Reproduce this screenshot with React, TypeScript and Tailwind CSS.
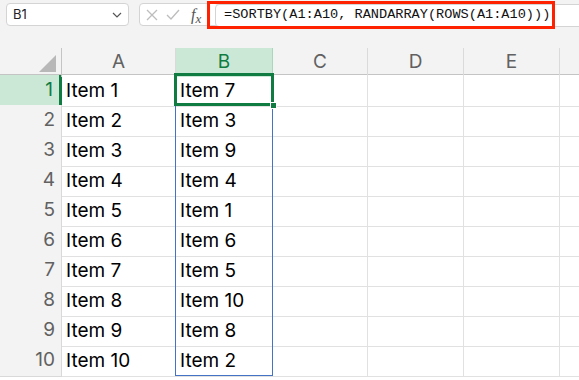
import React from "react";

const colA = ["Item 1", "Item 2", "Item 3", "Item 4", "Item 5", "Item 6", "Item 7", "Item 8", "Item 9", "Item 10"];
const colB = ["Item 7", "Item 3", "Item 9", "Item 4", "Item 1", "Item 6", "Item 5", "Item 10", "Item 8", "Item 2"];

const cols = "grid grid-cols-[62px_114px_97px_95px_96px_96px_1fr]";
const font = { fontFamily: "Inter, 'Liberation Sans', sans-serif" };

const App = () => {
  return (
    <div className="w-[579px] h-[380px] overflow-hidden bg-white relative" style={font}>
      {/* formula bar */}
      <div className="h-[48px] bg-[#f3f3f3] relative">
        <div className="flex items-start pt-[3px] pl-[6px] gap-[10px]">
          <div className="w-[123px] h-[23px] bg-white border border-[#d4d4d4] rounded-[4px] flex items-center justify-between pl-[6px] pr-[6px] text-[13px] text-[#222]">
            <span>B1</span>
            <svg width="10" height="6" viewBox="0 0 10 6" fill="none" stroke="#555" strokeWidth="1.2">
              <path d="M1 1l4 4 4-4" />
            </svg>
          </div>
          <div className="w-[80px] h-[23px] bg-white border border-[#d4d4d4] rounded-[4px] flex items-center pl-[6px] gap-[8px]">
            <svg width="12" height="12" viewBox="0 0 12 12" stroke="#bdbdbd" strokeWidth="1.3">
              <path d="M1 1l10 10M11 1L1 11" />
            </svg>
            <svg width="14" height="11" viewBox="0 0 14 11" fill="none" stroke="#bdbdbd" strokeWidth="1.3">
              <path d="M1 6l4 4 8-9" />
            </svg>
            <span className="text-[16px] italic text-[#555] ml-[3px] leading-none" style={{ fontFamily: "'Liberation Serif', serif" }}>
              f<span className="text-[13px] relative top-[3px]">x</span>
            </span>
          </div>
        </div>
        <div className="absolute left-[215px] top-[4px] right-[-10px] h-[23px] bg-white border border-[#d4d4d4] rounded-[4px] flex items-center pl-[8px] text-[13.6px] text-[#111]" style={{ fontFamily: "'Liberation Mono', monospace" }}>
          =SORTBY(A1:A10, RANDARRAY(ROWS(A1:A10)))
        </div>
        <div className="absolute left-[207px] top-[1px] w-[348px] h-[28px] border-[3px] border-[#ff2200]" />
      </div>

      {/* column headers */}
      <div className={`${cols} h-[27px] bg-[#f3f3f3] border-b border-[#c4c4c4] text-[19px] text-[#616161]`}>
        <div className="relative border-r border-[#c4c4c4]">
          <div className="absolute right-[5px] bottom-[5px] w-0 h-0 border-l-[17px] border-l-transparent border-b-[17px] border-b-[#b8b8b8]" />
        </div>
        <div className="flex items-center justify-center border-r border-[#dadada]">A</div>
        <div className="flex items-center justify-center bg-[#cbe8d7] text-[#107c41] border-r border-[#a8d8bb]">B</div>
        <div className="flex items-center justify-center border-r border-[#dadada]">C</div>
        <div className="flex items-center justify-center border-r border-[#dadada]">D</div>
        <div className="flex items-center justify-center border-r border-[#dadada]">E</div>
        <div />
      </div>

      {/* rows */}
      {colA.map((a, i) => (
        <div key={i} className={`${cols} h-[30px] text-[19px]`}>
          <div
            className={`flex items-center justify-end pr-[6px] border-b border-r ${
              i === 0
                ? "bg-[#cbe8d7] text-[#107c41] border-b-[#d9d9d9] border-r-[3px] border-r-[#107c41]"
                : "bg-[#f3f3f3] text-[#616161] border-[#d9d9d9]"
            }`}
          >
            {i + 1}
          </div>
          <div className="flex items-center pl-[4px] pt-[2px] border-b border-r border-[#e1e1e1] text-black">{a}</div>
          <div className="flex items-center pl-[4px] pt-[2px] border-b border-r border-[#e1e1e1] text-black">{colB[i]}</div>
          <div className="border-b border-r border-[#e1e1e1]" />
          <div className="border-b border-r border-[#e1e1e1]" />
          <div className="border-b border-r border-[#e1e1e1]" />
          <div className="border-b border-[#e1e1e1]" />
        </div>
      ))}

      {/* spill range + selection */}
      <div className="absolute left-[175px] top-[104px] w-[98px] h-[272px] border border-[#4472c4]" />
      <div className="absolute left-[174px] top-[73px] w-[100px] h-[33px] border-[3px] border-[#107c41]" />
      <div className="absolute left-[270px] top-[102px] w-[7px] h-[7px] bg-[#107c41] border border-white" />
    </div>
  );
};

export default App;
